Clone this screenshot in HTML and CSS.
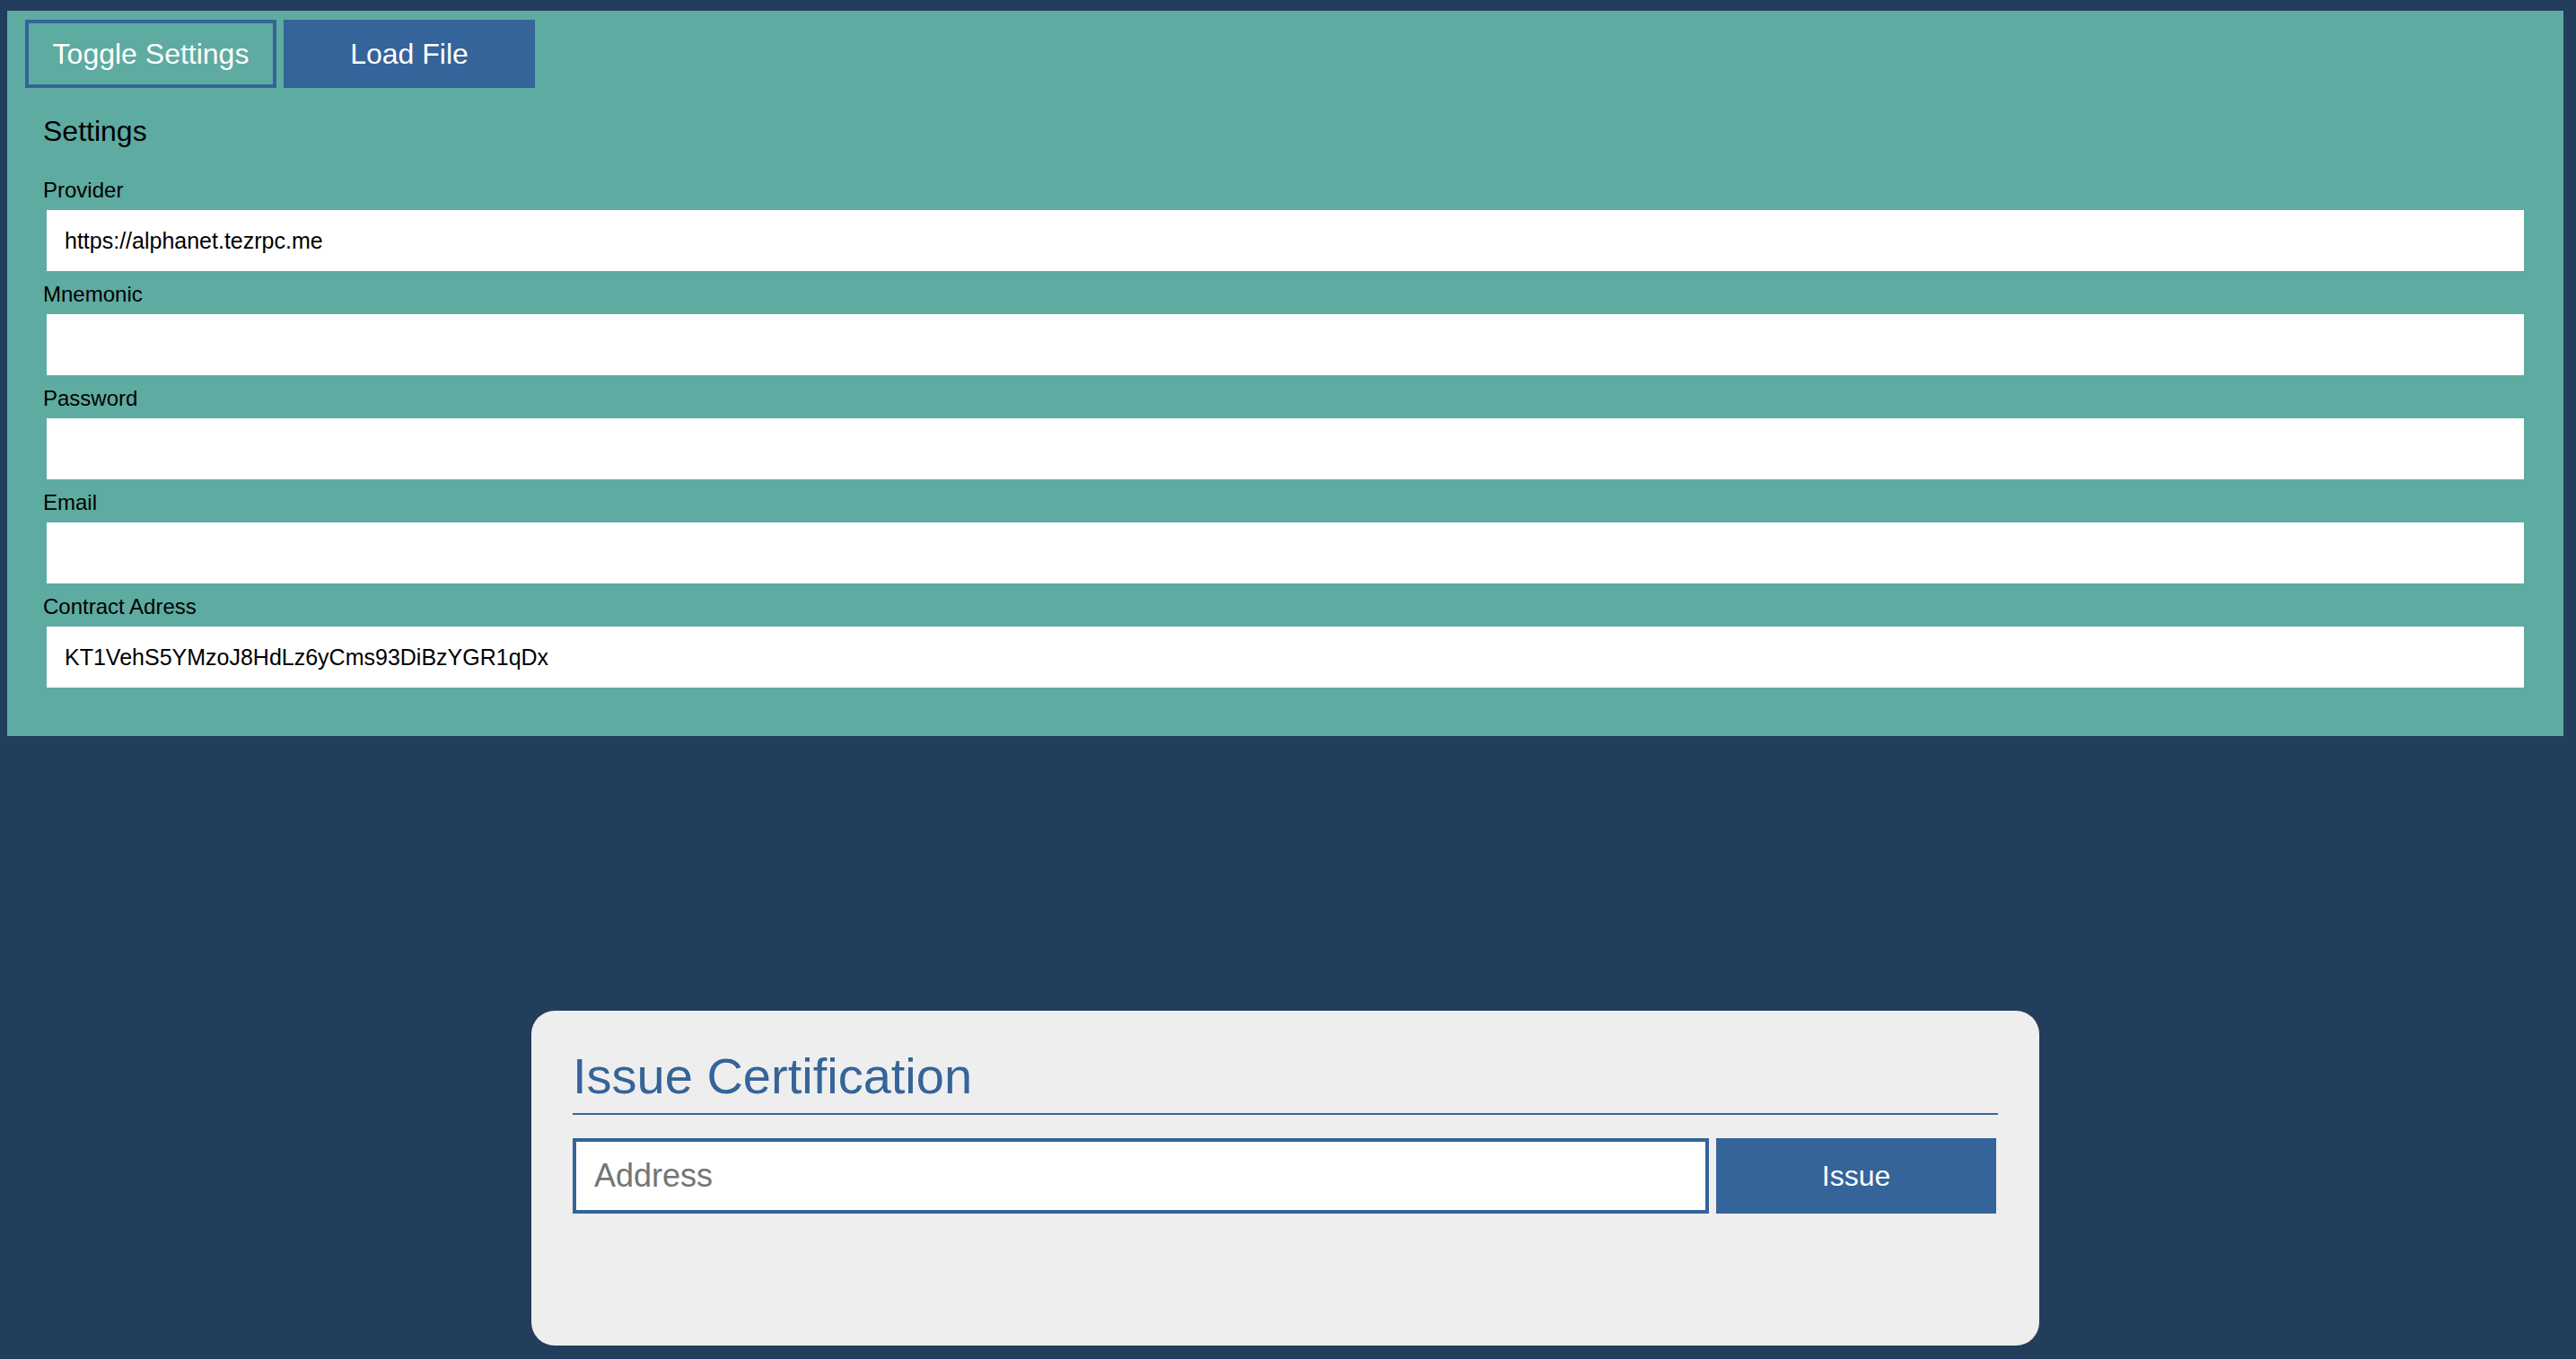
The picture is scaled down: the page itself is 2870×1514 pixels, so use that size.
FILE: index.html
```html
<!DOCTYPE html>
<html lang="en">
<head>
<meta charset="utf-8">
<title>Issue Certification</title>
<link rel="stylesheet" href="styles.css">
</head>
<body>
<div class="settings-panel">
  <div class="toolbar">
    <button class="btn btn-outline" type="button">Toggle Settings</button>
    <button class="btn btn-solid" type="button">Load File</button>
  </div>
  <div class="settings">
    <h3 class="settings-title">Settings</h3>
    <div class="field">
      <label class="field-label">Provider</label>
      <input class="field-input" type="text" value="https://alphanet.tezrpc.me">
    </div>
    <div class="field">
      <label class="field-label">Mnemonic</label>
      <input class="field-input" type="text" value="">
    </div>
    <div class="field">
      <label class="field-label">Password</label>
      <input class="field-input" type="password" value="">
    </div>
    <div class="field">
      <label class="field-label">Email</label>
      <input class="field-input" type="text" value="">
    </div>
    <div class="field">
      <label class="field-label">Contract Adress</label>
      <input class="field-input" type="text" value="KT1VehS5YMzoJ8HdLz6yCms93DiBzYGR1qDx">
    </div>
  </div>
</div>

<div class="card">
  <h2 class="card-title">Issue Certification</h2>
  <div class="issue-row">
    <input class="address-input" type="text" placeholder="Address">
    <button class="issue-btn" type="button">Issue</button>
  </div>
</div>
</body>
</html>
```
FILE: styles.css
```css
html {
  background: #223e5c;
}

body {
  margin: 0;
  background: #223e5c;
  font-family: "Liberation Sans", Arial, Helvetica, sans-serif;
  min-height: 1514px;
  overflow: hidden;
}

.settings-panel {
  margin: 12px 14px 0 8px;
  padding: 10px 20px 54px 20px;
  background: #5eaba2;
}

.toolbar {
  display: flex;
  gap: 8px;
}

.btn {
  width: 280px;
  height: 76px;
  box-sizing: border-box;
  font-family: "Liberation Sans", Arial, Helvetica, sans-serif;
  font-size: 32px;
  color: #ffffff;
  padding: 0;
  margin: 0;
  cursor: pointer;
}

.btn-outline {
  background: transparent;
  border: 4px solid #346499;
}

.btn-solid {
  background: #346499;
  border: 4px solid #346499;
}

.settings {
  padding: 0 20px;
}

.settings-title {
  margin: 30px 0 34px 0;
  font-size: 32px;
  line-height: 36px;
  font-weight: normal;
  color: #000000;
}

.field {
  margin-top: 12px;
  display: flex;
  flex-direction: column;
}

.field-label {
  font-size: 24px;
  line-height: 28px;
  color: #000000;
  margin-bottom: 8px;
}

.field-input {
  margin: 0 4px;
  height: 68px;
  box-sizing: border-box;
  border: none;
  outline: none;
  background: #ffffff;
  padding: 0 20px;
  font-family: "Liberation Sans", Arial, Helvetica, sans-serif;
  font-size: 25px;
  color: #000000;
}

.card {
  margin: 306px 0 0 592px;
  width: 1680px;
  box-sizing: border-box;
  padding: 41px 46px 147px 46px;
  background: #eeeeee;
  border-radius: 26px;
}

.card-title {
  margin: 0;
  font-size: 56px;
  line-height: 64px;
  font-weight: normal;
  color: #346499;
  padding-bottom: 9px;
  border-bottom: 2px solid #346499;
}

.issue-row {
  margin-top: 26px;
  display: flex;
  gap: 8px;
  padding-right: 2px;
}

.address-input {
  flex: 1;
  min-width: 0;
  height: 84px;
  box-sizing: border-box;
  border: 4px solid #346499;
  background: #ffffff;
  outline: none;
  padding: 0 20px;
  margin: 0;
  font-family: "Liberation Sans", Arial, Helvetica, sans-serif;
  font-size: 36px;
  color: #000000;
}

.address-input::placeholder {
  color: #757575;
}

.issue-btn {
  width: 312px;
  height: 84px;
  border: none;
  margin: 0;
  padding: 0;
  background: #346499;
  color: #ffffff;
  font-family: "Liberation Sans", Arial, Helvetica, sans-serif;
  font-size: 32px;
  cursor: pointer;
}
```
